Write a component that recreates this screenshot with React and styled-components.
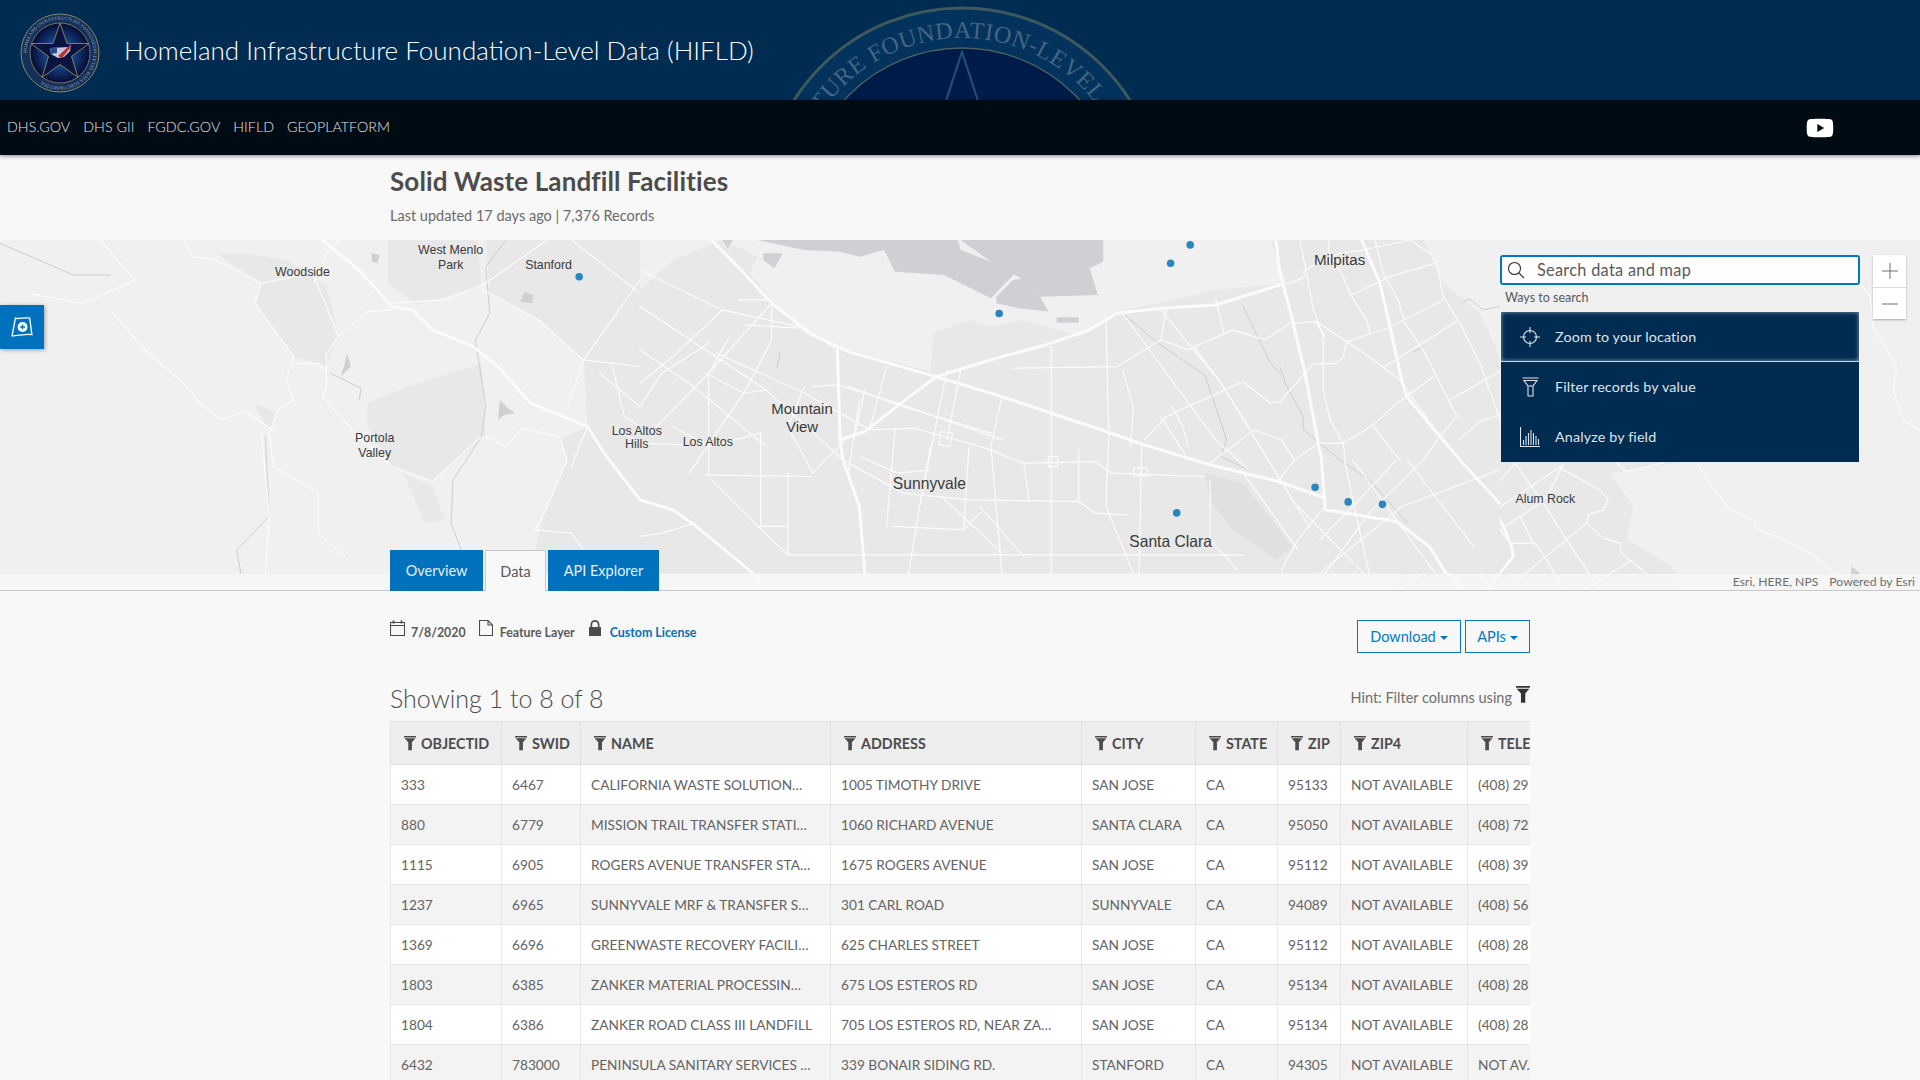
import React from "react";
import styled, { createGlobalStyle } from "styled-components";
import { FaYoutube } from "react-icons/fa";

const GlobalStyle = createGlobalStyle`
  html, body { margin: 0; padding: 0; height: 100%; overflow: hidden; }
  body { background: #f8f8f8; font-family: "Lato", "Open Sans", sans-serif; color: #4c4c4c; }
  * { box-sizing: border-box; }
`;

const Header = styled.header`
  position: relative;
  height: 100px;
  background: #002c52;
  display: flex;
  align-items: center;
  padding-left: 20px;
  overflow: hidden;
`;
const BackSeal = styled.svg`
  position: absolute;
  left: 752px;
  top: 0;
`;
const SealWrap = styled.div`
  display: flex;
  margin-top: 6px;
`;
const SiteTitle = styled.h1`
  position: relative;
  margin: 0 0 0 24px;
  font-size: 26px;
  font-weight: 300;
  color: #fff;
`;
const Nav = styled.nav`
  position: relative;
  height: 55px;
  background: #010b14;
  display: flex;
  align-items: center;
  gap: 13px;
  padding: 0 86px 2px 7px;
  box-shadow: 0 1px 4px rgba(0, 0, 0, 0.45);
`;
const NavLink = styled.a`
  color: #e4e6e8;
  font-size: 14.3px;
  font-weight: 300;
`;
const Youtube = styled.span`
  margin-left: auto;
  margin-top: 2px;
  display: flex;
  color: #fff;
  font-size: 28px;
`;
const TitleBlock = styled.div`
  width: 1140px;
  height: 85px;
  margin: 0 auto;
  padding-top: 10px;
`;
const PageTitle = styled.h2`
  margin: 0;
  font-size: 26px;
  line-height: 32px;
  font-weight: 700;
  letter-spacing: 0.12px;
  color: #4c4c4c;
`;
const Updated = styled.div`
  margin-top: 10px;
  font-size: 14.5px;
  color: #6a6a6a;
`;
const MapArea = styled.section`
  position: relative;
  height: 351px;
  border-bottom: 1px solid #c8c8c8;
  background: #f0f0f0;
`;
const MapSvg = styled.svg`
  display: block;
`;
const SoftBlocks = styled.g`
  filter: blur(1px);
`;
const MapLabel = styled.text`
  font-family: "Liberation Sans", sans-serif;
  fill: #3a3a3a;
  text-anchor: middle;
  font-size: ${(p) => p.$size || 10.1}px;
`;
const Attribution = styled.div`
  position: absolute;
  left: 0;
  right: 0;
  bottom: 0;
  height: 16px;
  background: rgba(248, 248, 248, 0.75);
  display: flex;
  justify-content: flex-end;
  gap: 11px;
  padding-right: 5px;
  font-size: 12.2px;
  line-height: 16px;
  color: #6e6e6e;
`;
const FloatButton = styled.div`
  position: absolute;
  left: 0;
  top: 65px;
  width: 44px;
  height: 44px;
  background: #0071bc;
  box-shadow: 1px 1px 4px rgba(0, 0, 0, 0.35);
  display: flex;
  align-items: center;
  justify-content: center;
`;
const SearchWidget = styled.div`
  position: absolute;
  left: 1500px;
  top: 15px;
  width: 360px;
`;
const SearchBox = styled.div`
  height: 30px;
  background: #fff;
  border: 2px solid #0079c1;
  border-radius: 3px;
  display: flex;
  align-items: center;
  padding: 0 0 1px 5px;
  gap: 12px;
  font-size: 16.3px;
  color: #595959;
  letter-spacing: 0.3px;
`;
const WaysLabel = styled.div`
  height: 27px;
  line-height: 26px;
  padding-left: 5px;
  background: #f0f0f0;
  font-size: 12.5px;
  color: #595959;
`;
const WaysItem = styled.div`
  height: 50px;
  background: #002c52;
  display: flex;
  align-items: center;
  padding: 0 0 ${(p) => (p.$active ? 0 : 1)}px 18px;
  gap: 14px;
  font-size: 14.3px;
  letter-spacing: 0.15px;
  color: #dfe4ea;
  margin: 0 1px;
  ${(p) => p.$active && "box-shadow: inset 0 0 4px rgba(255,255,255,.55); border-bottom: 1px solid #d0d6dc;"}
`;
const ItemIcon = styled.span`
  width: 22px;
  display: flex;
  justify-content: center;
`;
const ZoomControls = styled.div`
  position: absolute;
  left: 1873px;
  top: 15px;
  width: 33px;
  box-shadow: 0 1px 2px rgba(0, 0, 0, 0.3);
`;
const ZoomButton = styled.div`
  height: 32px;
  background: #fff;
  display: flex;
  align-items: center;
  justify-content: center;
  & + & { border-top: 1px solid #ddd; }
`;
const Tabs = styled.div`
  position: absolute;
  left: 390px;
  bottom: -1px;
  height: 41px;
  display: flex;
  gap: 2px;
`;
const Tab = styled.div`
  display: flex;
  align-items: center;
  justify-content: center;
  width: ${(p) => p.$w}px;
  font-size: 14.5px;
  color: ${(p) => (p.$on ? "#595959" : "#e6f0f7")};
  background: ${(p) => (p.$on ? "#f8f8f8" : "#0071bc")};
  border: ${(p) => (p.$on ? "1px solid #c8c8c8" : "none")};
  border-bottom: none;
`;
const Content = styled.main`
  width: 1140px;
  margin: 0 auto;
`;
const MetaRow = styled.div`
  height: 84px;
  padding-top: 29px;
  display: flex;
  align-items: flex-start;
`;
const MetaItem = styled.span`
  display: flex;
  align-items: flex-start;
  gap: 6px;
  margin-right: 13px;
  font-size: 12.4px;
  line-height: 26px;
  font-weight: 700;
  color: ${(p) => (p.$link ? "#0071bc" : "#5a5a5a")};
`;
const MetaIcon = styled.svg`
  margin-right: ${(p) => p.$gap || 0}px;
`;
const Buttons = styled.div`
  margin-left: auto;
  display: flex;
  gap: 4px;
  align-self: flex-start;
`;
const OutlineButton = styled.button`
  height: 33px;
  width: ${(p) => p.$w}px;
  border: 1px solid #0079c1;
  background: transparent;
  color: #0079c1;
  font: 400 14.5px "Lato", sans-serif;
  padding: 0;
  display: flex;
  align-items: center;
  justify-content: center;
  gap: 4px;
`;
const Caret = styled.i`
  border-left: 4px solid transparent;
  border-right: 4px solid transparent;
  border-top: 4px solid #0079c1;
  margin-top: 2px;
`;
const TableHead = styled.div`
  height: 47px;
  margin-top: -1px;
  display: flex;
  align-items: center;
  justify-content: space-between;
`;
const Showing = styled.div`
  font-size: 25px;
  font-weight: 300;
  color: #4c4c4c;
`;
const Hint = styled.div`
  display: flex;
  align-items: center;
  gap: 4px;
  font-size: 14.5px;
  color: #6e6e6e;
`;
const HintIcon = styled.span`
  display: flex;
  margin-bottom: 6px;
`;
const TableClip = styled.div`
  overflow: hidden;
  width: 1140px;
`;
const Table = styled.table`
  border-collapse: collapse;
  table-layout: fixed;
  width: 1240px;
`;
const Th = styled.th`
  width: ${(p) => p.$w}px;
  height: 43px;
  background: #eeeeee;
  border: 1px solid #e2e2e2;
  padding: 0 0 0 13px;
  text-align: left;
  font-size: 14.3px;
  font-weight: 700;
  color: #4c4c4c;
  white-space: nowrap;
  overflow: hidden;
`;
const ThInner = styled.span`
  display: flex;
  align-items: center;
  gap: 5px;
`;
const Tr = styled.tr`
  background: ${(p) => (p.$odd ? "#f3f3f3" : "#ffffff")};
`;
const Td = styled.td`
  height: 40px;
  border: 1px solid #e6e6e6;
  padding: 0 10px;
  font-size: 13.7px;
  color: #636363;
  white-space: nowrap;
  overflow: hidden;
`;

const FilterIcon = ({ size = 13, color = "#4c4c4c" }) => (
  <svg width={size} height={size * 1.3} viewBox="0 0 13 17">
    <path fill={color} d="M0 1h13v1.600H0zM.6 3.600h11.800L8.600 8v8.500H4.600V8z" />
  </svg>
);

// traced from crops of the map, each layer in its own crop's coordinates
const WEST = {
  x: 0, y: 196, sx: 0.3333, sy: 0.2722,
  blocks: [
    "530,40 640,130 625,190 720,350 800,380 830,280 800,140 770,110 700,60 600,40",
    "950,130 950,0 1170,0 1180,140 1020,195",
    "1190,0 1568,0 1568,1000 1300,1000 1330,830 1390,660 1368,600 1440,560 1430,360 1320,240 1200,160",
    "900,490 1000,440 1180,370 1190,590 1060,725 960,680 900,560",
    "620,490 680,520 660,570",
    "990,700 1060,740 1090,840 1040,850",
  ],
  water: [
    "850,340 860,380 835,410 845,370",
    "910,40 930,45 925,70 912,65",
    "1285,155 1305,165 1305,190 1275,185",
    "1225,480 1240,500 1262,520 1235,525 1220,540",
  ],
  creeks: [
    "0,10 180,105 270,105",
    "1240,0 1190,80 1200,220 1165,300 1190,500 1180,590 1110,720 1105,850 1130,930",
    "650,590 660,830 580,930 590,1000",
    "810,400 885,445 880,480",
  ],
  streets: [
    "245,0 330,120 270,155 200,190 70,160",
    "270,210 355,330 450,430 490,490 540,540 600,515 680,580",
    "830,0 800,40 770,130",
    "640,130 760,100",
    "640,130 625,190 720,350 700,420 720,480 680,510 660,580 670,680 780,760 780,880 860,970",
    "770,110 830,290",
    "720,370 780,370 800,400",
    "800,340 830,290 900,215 960,210",
    "800,340 800,440 790,470 870,580 960,680 1060,725 1170,600 1190,590 1240,620 1280,565 1370,590 1390,660 1330,830 1310,870",
    "1568,120 1430,360 1390,500",
    "1185,150 1320,240 1430,360 1568,380",
    "950,190 1090,180 1190,130 1340,0",
    "1400,0 1568,160",
    "1500,380 1530,530 1568,560",
    "450,0 470,50 530,60 640,130",
    "640,570 660,830 650,1000",
    "1310,870 1400,880 1470,1000",
    "1470,400 1568,500",
    "1500,560 1568,610",
    "1440,560 1400,680",
  ],
  freeways: ["790,0 880,90 960,200 1010,210 1060,270 1160,320 1220,380 1300,490 1380,530 1440,560 1480,640 1568,780"],
};

const CENTER = {
  x: 522.7, y: 196, sx: 0.4477, sy: 0.2722,
  blocks: [
    "150,0 215,50 200,100 240,180 300,280 380,330 530,395 535,280 600,240 640,260 700,240 800,290 870,215 1000,170 1050,150 1180,130 1150,0 1430,0 1465,130 1532,220 1568,350 1568,1000 0,1000 0,150 60,60",
  ],
  water: [
    "215,0 300,30 365,35 400,50 445,30 465,95 555,105 640,175 690,90 640,65 585,30 580,0",
    "585,0 845,0 845,65 820,85 835,165 730,170 695,115 640,65",
    "650,170 680,120 700,115 730,170 745,215 690,205 650,190",
    "225,40 260,40 245,85 225,60",
    "760,232 800,232 800,248 760,248",
    "150,0 170,0 160,25",
  ],
  lake: "1030,700 1100,730 1190,920 1160,960 1080,870 1040,780",
  creeks: [
    "880,220 945,310 1030,405 1050,500 1070,600 1060,650 1110,690",
    "1100,200 1150,370 1167,400",
    "1276,660 1330,720 1400,850",
    "255,340 250,385",
  ],
  streets: [
    "140,340 300,460 420,570 500,565 630,625 700,670 830,665 860,700 1030,710",
    "0,200 120,330 230,450 370,660 480,760 600,780 800,785 830,820 890,825",
    "0,90 150,210 290,260",
    "125,400 125,700",
    "220,580 220,860",
    "270,700 270,940",
    "120,705 315,710",
    "315,700 380,590",
    "270,945 660,945 1100,945",
    "560,390 510,800 490,1000",
    "660,470 640,620 660,1000",
    "750,320 750,1000",
    "850,230 855,580 850,800 900,1000",
    "915,620 910,1000",
    "680,385 870,380 950,300 1000,330 1080,270 1140,300 1167,270",
    "920,600 960,530 1100,425 1150,490 1167,485",
    "880,220 1050,600 1110,690",
    "950,210 1060,430 1220,860",
    "1040,670 1120,570 1170,600 1194,660",
    "1165,720 1194,660",
    "1250,800 1200,900 1170,990",
    "1380,660 1300,800 1240,900",
    "1568,690 1390,800 1240,1000",
    "1300,660 1450,1000",
    "1400,660 1520,920",
    "1285,660 1300,780 1330,1000",
    "1429,660 1330,820 1250,1000",
    "1200,800 1320,1000",
    "550,770 660,940",
    "460,860 590,870 620,820",
    "180,180 240,180 240,300",
    "190,255 300,265 360,330",
    "120,400 190,460 240,300",
    "360,435 470,490 660,600",
    "400,480 380,700",
    "450,380 420,560",
    "585,390 560,600",
    "1050,180 1065,280",
    "950,530 1000,660",
    "30,560 125,400 240,190",
    "0,430 60,350 150,210",
    "0,500 40,400 125,310",
    "315,700 270,560 300,440",
    "380,440 480,500 640,580",
    "410,450 390,600",
    "465,570 450,860",
    "530,620 510,800",
    "600,620 590,870",
    "700,670 710,785",
    "800,630 800,790",
    "1000,620 990,560 970,500",
    "1100,700 1140,790 1200,930",
    "1040,720 1040,900 1090,990",
    "880,390 900,500 895,620",
    "960,210 950,300",
    "1010,320 1060,430 1110,560",
    "620,800 700,950",
    "400,650 470,700 530,690",
    "270,860 215,860 130,720",
    "100,850 40,880 0,890",
    "215,860 270,945",
    "0,330 90,430 230,620",
    "60,560 125,620 220,580",
    "0,610 76,615",
    "125,400 160,300",
    "315,440 360,435",
    "230,450 190,460 130,600 90,700",
    "548,575 570,580 565,620 545,615 548,575",
    "745,650 762,650 762,680 745,680 745,650",
    "900,685 925,685 925,708 900,708 900,685",
  ],
  freeways: [
    "130,0 190,100 240,190 315,285 380,335 540,410 660,470 750,520 850,575 920,615 1040,675 1165,725 1250,775",
    "365,600 410,575 460,510 540,410 660,350 740,315 820,270 870,220 950,205 1050,195 1167,135",
    "1160,0 1167,100",
    "1243,660 1250,810",
    "1495,660 1568,790",
    "0,780 60,810 95,850 155,930 220,1020",
    "360,330 365,600 370,660 400,800 410,1000",
    "1250,810 1380,845 1440,920 1470,1000",
  ],
};

const MILPITAS = {
  x: 1045.3, y: 196, sx: 0.2722, sy: 0.2722,
  creeks: [
    "0,380 20,440 70,530 70,570 180,660",
    "550,185 570,178 610,210 660,200",
    "400,335 435,320",
  ],
  streets: [
    "0,135 30,130 75,110 70,95 110,70 180,40 250,30 390,0",
    "60,0 80,100 100,210 130,290 130,450 150,540 190,610 195,660",
    "145,0 150,70 180,90 215,170 260,240 270,280",
    "215,165 330,110 465,70",
    "285,0 310,100 355,180 375,250 430,330 530,530",
    "390,0 450,40 470,70 490,170 545,260 600,370 660,540",
    "0,270 30,250 110,245 200,305 280,360 360,420 480,590",
    "200,305 320,265 490,180",
    "110,250 135,290",
    "200,305 190,350 170,370 100,372 75,400 0,485",
    "315,380 530,245",
    "380,470 460,410",
    "190,610 280,555 350,490 380,470",
    "280,560 360,660",
    "45,660 115,610 190,610",
    "510,480 660,395",
    "530,530 480,590 430,660",
    "535,600 600,545 660,525",
  ],
  freeways: [
    "0,100 30,210 75,400 115,610 125,660",
    "245,0 300,130 330,260 365,420 380,470 480,590 540,660",
  ],
};

const EAST_HILLS = {
  x: 1208.7, y: 196, sx: 0.2722, sy: 0.2722,
  streets: ["1140,130 1170,170 1180,260 1250,380 1240,450 1270,540 1320,570"],
};

const ALUM_ROCK = {
  x: 1143.3, y: 359.3, sx: 0.2722, sy: 0.2722,
  blocks: ["0,0 900,0 900,60 630,100 700,200 680,300 800,370 830,400 830,450 0,450"],
  water: ["1355,380 1380,400 1385,450 1350,450"],
  creeks: ["0,200 25,280 20,400"],
  streets: [
    "30,110 100,40 130,55 260,170",
    "30,110 60,185 130,280 240,400 280,450",
    "0,130 30,110",
    "200,60 60,185 0,225",
    "90,330 310,195 490,75",
    "490,75 440,170 420,190 360,230 300,270 100,380 0,450",
    "345,70 430,190 500,300 600,450",
    "480,85 600,150 625,180 610,210 565,225 560,250 500,300 340,430",
    "560,250 610,295 660,310 665,340 750,410",
    "690,365 550,450",
    "330,310 405,310 440,360 490,450",
    "300,270 330,310",
    "260,170 345,70",
    "360,230 400,310",
    "890,70 930,130 990,210 1060,240 1070,265 1150,300 1240,345 1300,400 1340,450",
    "650,70 680,95 790,70",
  ],
  freeways: [
    "120,0 260,170 310,260 335,320 340,350 260,450",
    "0,250 90,330 130,380 190,450",
  ],
};

const Lines = ({ list = [], stroke, width }) =>
  list.map((pts, i) => (
    <polyline
      key={i}
      points={pts}
      fill="none"
      stroke={stroke}
      strokeWidth={width}
      strokeLinejoin="round"
      strokeLinecap="round"
      vectorEffect="non-scaling-stroke"
    />
  ));

const Fills = ({ list = [], fill }) => list.map((pts, i) => <polygon key={i} points={pts} fill={fill} />);

const MapLayer = ({ data }) => (
  <g transform={`translate(${data.x},${data.y}) scale(${data.sx},${data.sy})`}>
    <SoftBlocks>
      <Fills list={data.blocks} fill="#e8e8e8" />
    </SoftBlocks>
    <Fills list={data.water} fill="#cfcfd4" />
    {data.lake && <polygon points={data.lake} fill="#e0e0e0" />}
    <Lines list={data.creeks} stroke="#cdcdcd" width={1} />
    <Lines list={data.streets} stroke="#fbfbfb" width={1.25} />
    <Lines list={data.freeways} stroke="#fbfbfb" width={3} />
  </g>
);

const POINTS = [[473, 226], [972, 200], [956, 215], [816, 256], [1074, 398], [1101, 410], [1129, 412], [961, 419]];

const MapDrawing = () => (
  <MapSvg width="1920" height="350" viewBox="0 196 1568 286" preserveAspectRatio="none">
    <rect x="0" y="196" width="1568" height="286" fill="#f0f0f0" />
    <MapLayer data={ALUM_ROCK} />
    <MapLayer data={WEST} />
    <MapLayer data={CENTER} />
    <MapLayer data={MILPITAS} />
    <MapLayer data={EAST_HILLS} />
    {POINTS.map(([x, y]) => (
      <circle key={x} cx={x} cy={y} r="3.1" fill="#2a86bf" />
    ))}
    <MapLabel x="247" y="225.500">Woodside</MapLabel>
    <MapLabel x="368" y="207.500">West Menlo</MapLabel>
    <MapLabel x="368" y="219.500">Park</MapLabel>
    <MapLabel x="448" y="219.500">Stanford</MapLabel>
    <MapLabel x="306" y="361">Portola</MapLabel>
    <MapLabel x="306" y="373">Valley</MapLabel>
    <MapLabel x="520" y="355">Los Altos</MapLabel>
    <MapLabel x="520" y="366">Hills</MapLabel>
    <MapLabel x="578" y="364">Los Altos</MapLabel>
    <MapLabel x="655" y="338" $size={12.2}>Mountain</MapLabel>
    <MapLabel x="655" y="353" $size={12.2}>View</MapLabel>
    <MapLabel x="759" y="399.500" $size={12.8}>Sunnyvale</MapLabel>
    <MapLabel x="956" y="446.500" $size={12.8}>Santa Clara</MapLabel>
    <MapLabel x="1094" y="216.500" $size={12.4}>Milpitas</MapLabel>
    <MapLabel x="1262" y="411">Alum Rock</MapLabel>
  </MapSvg>
);

const STAR = "962,52 997,159 1109,159 1019,224 1053,332 962,265 871,332 905,224 815,159 927,159";
const SMALL_STAR = "0,-30 7,-9.500 29,-9.500 11.500,3.500 18,24.500 0,11.500 -18,24.500 -11.500,3.500 -29,-9.500 -7,-9.500";

const BackgroundSeal = () => (
  <BackSeal width="420" height="100" viewBox="752 0 420 100">
    <circle cx="962" cy="207" r="199" fill="#03325c" stroke="#3f5a5e" strokeWidth="3" />
    <circle cx="962" cy="207" r="159" fill="#001b47" stroke="#4a6064" strokeWidth="1.500" />
    <polygon points={STAR} fill="none" stroke="#23527a" strokeWidth="2" />
    <path id="seal-arc" d="M793 207 A169 169 0 0 1 1131 207" fill="none" />
    <text fontFamily="Liberation Serif, serif" fontSize="24" fill="#44667f" letterSpacing="0.5">
      <textPath href="#seal-arc" startOffset="172">FOUNDATION-LEVEL DATA</textPath>
    </text>
    <text fontFamily="Liberation Serif, serif" fontSize="24" fill="#44667f" letterSpacing="0.5" textAnchor="end">
      <textPath href="#seal-arc" startOffset="165">INFRASTRUCTURE</textPath>
    </text>
  </BackSeal>
);

const Seal = () => (
  <svg width="80" height="80" viewBox="-40 -40 80 80">
    <defs>
      <radialGradient id="seal-glow">
        <stop offset="0" stopColor="#3f7fc2" />
        <stop offset="0.55" stopColor="#123a78" />
        <stop offset="1" stopColor="#050a33" />
      </radialGradient>
    </defs>
    <circle r="39" fill="#14315c" stroke="#8b8a62" strokeWidth="1" />
    <circle r="30" fill="url(#seal-glow)" stroke="#8b8a62" strokeWidth="0.8" />
    <polygon points={SMALL_STAR} fill="#0b1440" stroke="#8b8a62" strokeWidth="0.9" />
    <path d="M-10 -5 L9 -6 L11 -9 L10 -2 L4 4 L-2 5 L-9 1z" fill="#c9c9d6" />
    <path d="M-2 3 L10 -8 L11 -6 L2 5z" fill="#b6323c" />
    <path d="M-10 -5 L-3 -5 L-3 0 L-9 1z" fill="#2b4c8c" />
    <path id="mini-arc" d="M-33.500 0 A33.500 33.500 0 1 1 33.500 0 A33.500 33.500 0 1 1 -33.500 0" fill="none" />
    <text fontFamily="Liberation Serif, serif" fontSize="4.6" fill="#9fa8b0" letterSpacing="0.2">
      <textPath href="#mini-arc">HOMELAND INFRASTRUCTURE FOUNDATION-LEVEL DATA SUBCOMMITTEE</textPath>
    </text>
  </svg>
);

const COLUMNS = [
  { label: "OBJECTID", w: 111 },
  { label: "SWID", w: 79 },
  { label: "NAME", w: 250 },
  { label: "ADDRESS", w: 251 },
  { label: "CITY", w: 114 },
  { label: "STATE", w: 82 },
  { label: "ZIP", w: 63 },
  { label: "ZIP4", w: 127 },
  { label: "TELEPHONE", w: 163 },
];

const ROWS = [
  ["333", "6467", "CALIFORNIA WASTE SOLUTION…", "1005 TIMOTHY DRIVE", "SAN JOSE", "CA", "95133", "NOT AVAILABLE", "(408) 29"],
  ["880", "6779", "MISSION TRAIL TRANSFER STATI…", "1060 RICHARD AVENUE", "SANTA CLARA", "CA", "95050", "NOT AVAILABLE", "(408) 72"],
  ["1115", "6905", "ROGERS AVENUE TRANSFER STA…", "1675 ROGERS AVENUE", "SAN JOSE", "CA", "95112", "NOT AVAILABLE", "(408) 39"],
  ["1237", "6965", "SUNNYVALE MRF & TRANSFER S…", "301 CARL ROAD", "SUNNYVALE", "CA", "94089", "NOT AVAILABLE", "(408) 56"],
  ["1369", "6696", "GREENWASTE RECOVERY FACILI…", "625 CHARLES STREET", "SAN JOSE", "CA", "95112", "NOT AVAILABLE", "(408) 28"],
  ["1803", "6385", "ZANKER MATERIAL PROCESSIN…", "675 LOS ESTEROS RD", "SAN JOSE", "CA", "95134", "NOT AVAILABLE", "(408) 28"],
  ["1804", "6386", "ZANKER ROAD CLASS III LANDFILL", "705 LOS ESTEROS RD, NEAR ZA…", "SAN JOSE", "CA", "95134", "NOT AVAILABLE", "(408) 28"],
  ["6432", "783000", "PENINSULA SANITARY SERVICES …", "339 BONAIR SIDING RD.", "STANFORD", "CA", "94305", "NOT AVAILABLE", "NOT AV."],
];

const App = () => (
  <>
    <GlobalStyle />
    <Header>
      <BackgroundSeal />
      <SealWrap><Seal /></SealWrap>
      <SiteTitle>Homeland Infrastructure Foundation-Level Data (HIFLD)</SiteTitle>
    </Header>
    <Nav>
      <NavLink>DHS.GOV</NavLink>
      <NavLink>DHS GII</NavLink>
      <NavLink>FGDC.GOV</NavLink>
      <NavLink>HIFLD</NavLink>
      <NavLink>GEOPLATFORM</NavLink>
      <Youtube><FaYoutube /></Youtube>
    </Nav>
    <TitleBlock>
      <PageTitle>Solid Waste Landfill Facilities</PageTitle>
      <Updated>Last updated 17 days ago | 7,376 Records</Updated>
    </TitleBlock>
    <MapArea>
      <MapDrawing />
      <Attribution>
        <span>Esri, HERE, NPS</span>
        <span>Powered by Esri</span>
      </Attribution>
      <FloatButton>
        <svg width="22" height="22" viewBox="0 0 20 20" fill="none" stroke="#fff" strokeWidth="1.2">
          <path d="M4 2 C7 3 13 1 17 2 L19 17 C15 16 6 18 1 18z" />
          <circle cx="10.500" cy="10" r="4.500" fill="#fff" stroke="none" />
          <path d="M10.500 7.800v4.400M8.300 10h4.400" stroke="#0071bc" />
        </svg>
      </FloatButton>
      <SearchWidget>
        <SearchBox>
          <svg width="18" height="18" viewBox="0 0 18 18" fill="none" stroke="#333" strokeWidth="1.1">
            <circle cx="7.500" cy="7.500" r="6" />
            <path d="M12 12l5 5" />
          </svg>
          <span>Search data and map</span>
        </SearchBox>
        <WaysLabel>Ways to search</WaysLabel>
        <WaysItem $active>
          <ItemIcon>
            <svg width="20" height="20" viewBox="0 0 20 20" fill="none" stroke="#dfe4ea" strokeWidth="1.1">
              <circle cx="10" cy="10" r="6.500" />
              <path d="M10 0v6M10 14v6M0 10h6M14 10h6" />
            </svg>
          </ItemIcon>
          <span>Zoom to your location</span>
        </WaysItem>
        <WaysItem>
          <ItemIcon>
            <svg width="17" height="20" viewBox="0 0 17 20" fill="none" stroke="#dfe4ea" strokeWidth="1.1">
              <path d="M0.500 1h16M2 3.500h13L11 9v10H6V9z" />
              <path d="M6.500 9h4" />
            </svg>
          </ItemIcon>
          <span>Filter records by value</span>
        </WaysItem>
        <WaysItem>
          <ItemIcon>
            <svg width="20" height="20" viewBox="0 0 20 20" fill="none" stroke="#dfe4ea" strokeWidth="1.1">
              <path d="M.5 0v19.500H20" />
              <path d="M3.500 18v-5M6 18V9M8.500 18V6M11 18V3M13.500 18V6M16 18v-9M18.500 18v-6" />
            </svg>
          </ItemIcon>
          <span>Analyze by field</span>
        </WaysItem>
      </SearchWidget>
      <ZoomControls>
        <ZoomButton>
          <svg width="16" height="16" viewBox="0 0 16 16" stroke="#6e6e6e"><path d="M0 8h16M8 0v16" /></svg>
        </ZoomButton>
        <ZoomButton>
          <svg width="16" height="16" viewBox="0 0 16 16" stroke="#6e6e6e"><path d="M0 8h16" /></svg>
        </ZoomButton>
      </ZoomControls>
      <Tabs>
        <Tab $w={93}>Overview</Tab>
        <Tab $w={61} $on>Data</Tab>
        <Tab $w={111}>API Explorer</Tab>
      </Tabs>
    </MapArea>
    <Content>
      <MetaRow>
        <MetaItem>
          <MetaIcon width="15" height="16" viewBox="0 0 15 16" fill="none" stroke="#4c4c4c" strokeWidth="1.1">
            <path d="M.5 2.500h14v13H.5zM.5 5.500h14" />
            <path d="M3.500 .5v3M11.500 .5v3" strokeWidth="1.800" />
          </MetaIcon>
          <span>7/8/2020</span>
        </MetaItem>
        <MetaItem>
          <MetaIcon width="14" height="16" viewBox="0 0 14 16" fill="none" stroke="#4c4c4c" strokeWidth="1.1" $gap={1}>
            <path d="M.5 .5h8.500l4.500 4.500v10.500H.5zM9 .5V5h4.500" />
          </MetaIcon>
          <span>Feature Layer</span>
        </MetaItem>
        <MetaItem $link>
          <MetaIcon width="14" height="16" viewBox="0 0 14 16" $gap={2}>
            <path fill="#4c4c4c" d="M1 7h1.500V4.500a4.500 4.500 0 0 1 9 0V7H13v9H1zM4.200 7h5.600V4.500a2.800 2.800 0 0 0-5.600 0z" />
          </MetaIcon>
          <span>Custom License</span>
        </MetaItem>
        <Buttons>
          <OutlineButton $w={104}>Download <Caret /></OutlineButton>
          <OutlineButton $w={65}>APIs <Caret /></OutlineButton>
        </Buttons>
      </MetaRow>
      <TableHead>
        <Showing>Showing 1 to 8 of 8</Showing>
        <Hint>
          <span>Hint: Filter columns using</span>
          <HintIcon><FilterIcon size={14} color="#333" /></HintIcon>
        </Hint>
      </TableHead>
      <TableClip>
        <Table>
          <thead>
            <tr>
              {COLUMNS.map((c) => (
                <Th key={c.label} $w={c.w}>
                  <ThInner><FilterIcon size={12} />{c.label}</ThInner>
                </Th>
              ))}
            </tr>
          </thead>
          <tbody>
            {ROWS.map((row, i) => (
              <Tr key={row[0]} $odd={i % 2 === 1}>
                {row.map((cell, j) => <Td key={j}>{cell}</Td>)}
              </Tr>
            ))}
          </tbody>
        </Table>
      </TableClip>
    </Content>
  </>
);

export default App;
